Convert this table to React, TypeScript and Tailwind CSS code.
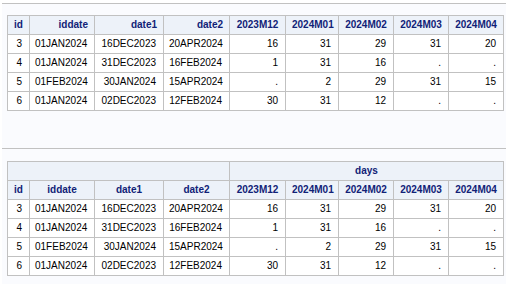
import React from "react";

const cols = [
  { key: "id", w: "w-[22px]" },
  { key: "iddate", w: "w-[65px]" },
  { key: "date1", w: "w-[69px]" },
  { key: "date2", w: "w-[66px]" },
  { key: "2023M12", w: "w-[56px]" },
  { key: "2024M01", w: "w-[53px]" },
  { key: "2024M02", w: "w-[55px]" },
  { key: "2024M03", w: "w-[55px]" },
  { key: "2024M04", w: "w-[55px]" },
];

const rows = [
  ["3", "01JAN2024", "16DEC2023", "20APR2024", "16", "31", "29", "31", "20"],
  ["4", "01JAN2024", "31DEC2023", "16FEB2024", "1", "31", "16", ".", "."],
  ["5", "01FEB2024", "30JAN2024", "15APR2024", ".", "2", "29", "31", "15"],
  ["6", "01JAN2024", "02DEC2023", "12FEB2024", "30", "31", "12", ".", "."],
];

const th = "h-[19px] border border-[#c1c1c1] bg-[#edf2f9] px-[6px] py-0 font-bold text-[#112277] leading-[12px]";
const td = "h-[19px] border border-[#c1c1c1] bg-white pl-[5px] pr-[7px] py-0 text-right text-black leading-[12px]";

function Body() {
  return (
    <tbody>
      {rows.map((r, i) => (
        <tr key={i}>
          {r.map((v, j) => (
            <td key={j} className={td + (j === 0 ? " text-center pr-[5px]" : "")}>
              {v}
            </td>
          ))}
        </tr>
      ))}
    </tbody>
  );
}

function Cols() {
  return (
    <colgroup>
      {cols.map((c) => (
        <col key={c.key} className={c.w} />
      ))}
    </colgroup>
  );
}

export default function App() {
  return (
    <div className="w-[506px] h-[284px] bg-white pl-[2px] pt-[3px] font-['Liberation_Sans',Arial,sans-serif] text-[10px]">
      <div className="h-full bg-[#fafbfe] border-t border-[#c1c1c1]">
        <div className="pl-[5px] pt-[11px]">
          <table className="table-fixed border-collapse w-[497px]">
            <Cols />
            <thead>
              <tr>
                {cols.map((c, j) => (
                  <th key={c.key} className={th + (j === 0 ? " text-center" : j < 4 ? " text-right" : " text-center")}>
                    {c.key}
                  </th>
                ))}
              </tr>
            </thead>
            <Body />
          </table>
        </div>
        <div className="mt-[37px] border-t border-[#c1c1c1] pl-[5px] pt-[12px]">
          <table className="table-fixed border-collapse w-[497px]">
            <Cols />
            <thead>
              <tr>
                <th colSpan={4} className={th}></th>
                <th colSpan={5} className={th + " text-center"}>days</th>
              </tr>
              <tr>
                {cols.map((c) => (
                  <th key={c.key} className={th + " text-center"}>
                    {c.key}
                  </th>
                ))}
              </tr>
            </thead>
            <Body />
          </table>
        </div>
      </div>
    </div>
  );
}
